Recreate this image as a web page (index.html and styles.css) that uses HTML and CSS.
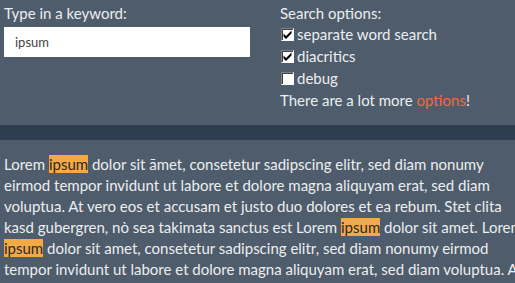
FILE: index.html
```html
<!DOCTYPE html>
<html lang="en">
<head>
    <meta charset="UTF-8">
    <title>mark.js - keyword</title>
    <link rel="stylesheet" href="styles.css">
</head>
<body>
    <div class="panel">
        <div class="panel-col keyword-col">
            <label for="keyword" class="panel-label">Type in a keyword:</label>
            <input type="text" id="keyword" class="keyword-input" value="ipsum">
        </div>
        <div class="panel-col options-col">
            <div class="panel-label">Search options:</div>
            <label class="option"><input type="checkbox" checked> separate word search</label>
            <label class="option"><input type="checkbox" checked> diacritics</label>
            <label class="option"><input type="checkbox"> debug</label>
            <div class="more">There are a lot more <a href="#">options</a>!</div>
        </div>
    </div>
    <div class="divider"></div>
    <div class="context">
        <p>Lorem <mark>ipsum</mark> dolor sit āmet, consetetur sadipscing elitr, sed diam nonumy eirmod tempor invidunt ut labore et dolore magna aliquyam erat, sed diam voluptua. At vero eos et accusam et justo duo dolores et ea rebum. Stet clita kasd gubergren, nò sea takimata sanctus est Lorem <mark>ipsum</mark> dolor sit amet. Lorem <mark>ipsum</mark> dolor sit amet, consetetur sadipscing elitr, sed diam nonumy eirmod tempor invidunt ut labore et dolore magna aliquyam erat, sed diam voluptua. At vero eos et accusam et justo duo dolores et ea rebum.</p>
    </div>
</body>
</html>
```

FILE: styles.css
```css
html, body {
    margin: 0;
    padding: 0;
    height: 100%;
    overflow: hidden;
    background-color: #4e5c6b;
    color: #eceef0;
    font-family: Lato, "Open Sans", sans-serif;
    font-size: 15px;
}

.panel {
    display: flex;
    height: 125px;
    padding: 3px 4px 0;
    box-sizing: border-box;
}

.keyword-col {
    width: 276px;
    display: flex;
    flex-direction: column;
}

.panel-label {
    line-height: 20px;
    display: block;
}

.keyword-input {
    margin-top: 4px;
    width: 246px;
    height: 30px;
    border: none;
    padding: 0 11px;
    box-sizing: border-box;
    font-family: Lato, sans-serif;
    font-size: 13px;
    color: #444;
    background: #fff;
    outline: none;
}

.options-col {
    display: flex;
    flex-direction: column;
}

.option {
    display: flex;
    align-items: center;
    gap: 3px;
    height: 22px;
    margin-left: 1px;
}

.option input {
    appearance: none;
    -webkit-appearance: none;
    margin: 0;
    width: 13px;
    height: 13px;
    background: #fff;
    border: 1px solid;
    border-color: #808080 #fff #fff #808080;
    box-shadow: inset 1px 1px 0 #404040;
    box-sizing: border-box;
}

.option input:checked {
    background: #fff url("data:image/svg+xml;utf8,<svg xmlns='http://www.w3.org/2000/svg' width='11' height='11' viewBox='0 0 11 11'><path d='M1.5 4.5 L4 7 L9.5 1.5 L9.5 4.5 L4 10 L1.5 7.5 Z' fill='black'/></svg>") no-repeat 0 0;
}

.more {
    line-height: 22px;
}

.more a {
    color: #f26a3a;
    text-decoration: none;
}

.divider {
    height: 15px;
    background-color: #2e3e50;
}

.context {
    width: 525px;
    padding: 14px 4px 0;
}

.context p {
    margin: 0;
    line-height: 21px;
}

mark {
    background-color: #f3a945;
    color: #2a2a2a;
}
```
